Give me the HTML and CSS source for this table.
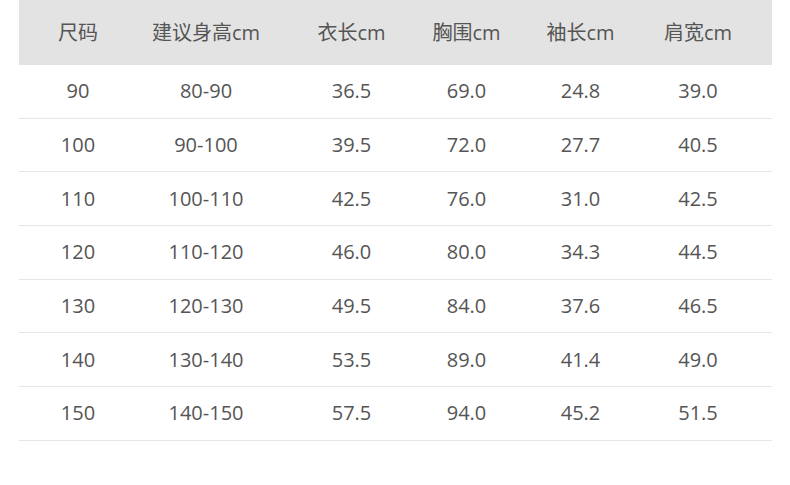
FILE: index.html
```html
<!DOCTYPE html>
<html lang="zh">
<head>
<meta charset="utf-8">
<title>尺码表</title>
<link rel="stylesheet" href="styles.css">
</head>
<body>
<div class="size-table">
  <div class="row head">
    <div class="cell">尺码</div><div class="cell">建议身高cm</div><div class="cell">衣长cm</div><div class="cell">胸围cm</div><div class="cell">袖长cm</div><div class="cell">肩宽cm</div>
  </div>
  <div class="row"><div class="cell">90</div><div class="cell">80-90</div><div class="cell">36.5</div><div class="cell">69.0</div><div class="cell">24.8</div><div class="cell">39.0</div></div>
  <div class="row"><div class="cell">100</div><div class="cell">90-100</div><div class="cell">39.5</div><div class="cell">72.0</div><div class="cell">27.7</div><div class="cell">40.5</div></div>
  <div class="row"><div class="cell">110</div><div class="cell">100-110</div><div class="cell">42.5</div><div class="cell">76.0</div><div class="cell">31.0</div><div class="cell">42.5</div></div>
  <div class="row"><div class="cell">120</div><div class="cell">110-120</div><div class="cell">46.0</div><div class="cell">80.0</div><div class="cell">34.3</div><div class="cell">44.5</div></div>
  <div class="row"><div class="cell">130</div><div class="cell">120-130</div><div class="cell">49.5</div><div class="cell">84.0</div><div class="cell">37.6</div><div class="cell">46.5</div></div>
  <div class="row"><div class="cell">140</div><div class="cell">130-140</div><div class="cell">53.5</div><div class="cell">89.0</div><div class="cell">41.4</div><div class="cell">49.0</div></div>
  <div class="row"><div class="cell">150</div><div class="cell">140-150</div><div class="cell">57.5</div><div class="cell">94.0</div><div class="cell">45.2</div><div class="cell">51.5</div></div>
</div>
</body>
</html>
```
FILE: styles.css
```css
html, body {
  margin: 0;
  padding: 0;
  background: #ffffff;
}
body {
  font-family: "Open Sans", "Noto Sans CJK SC", sans-serif;
  color: #555555;
  font-size: 20px;
}
.size-table {
  margin-left: 19px;
  width: 753px;
  display: flex;
  flex-direction: column;
}
.row {
  display: grid;
  grid-template-columns: 118px 138px 153px 77px 151px 84px;
  height: 52.7px;
  border-bottom: 1px solid #e6e6e6;
  align-items: center;
}
.row.head {
  height: 65px;
  border-bottom: none;
  background: #e3e3e3;
  font-size: 20px;
}
.cell {
  text-align: center;
  white-space: nowrap;
  line-height: 1;
}
```
